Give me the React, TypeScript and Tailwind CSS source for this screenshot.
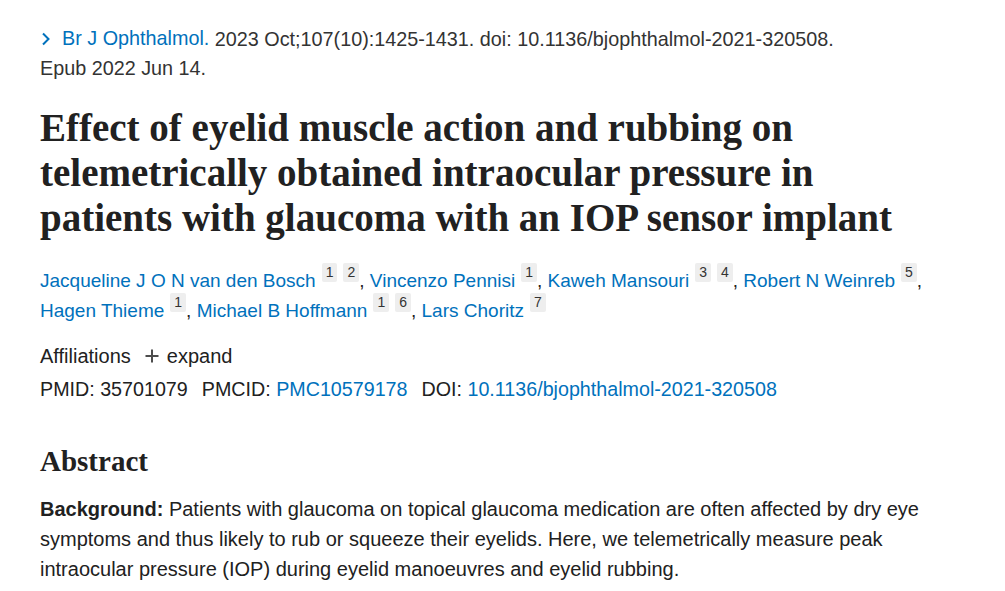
const sans = "font-['Liberation_Sans',Arial,sans-serif]"
const serif = "font-['Liberation_Serif','Times_New_Roman',serif]"

function Sup({ n }: { n: string }) {
  return (
    <span className="ml-[6px] inline-block align-top relative top-[-3px] bg-[#eeeeee] text-[#333] text-[14px] leading-[19px] px-[4px] rounded-[2px]">
      {n}
    </span>
  )
}

function Author({ name, refs, last }: { name: string; refs: string[]; last?: boolean }) {
  return (
    <span>
      <a className="text-[#0071bc]">{name}</a>
      {refs.map((r) => (
        <Sup key={r} n={r} />
      ))}
      {!last && <span className="text-[#212121]">, </span>}
    </span>
  )
}

export default function App() {
  const authors: { name: string; refs: string[] }[] = [
    { name: "Jacqueline J O N van den Bosch", refs: ["1", "2"] },
    { name: "Vincenzo Pennisi", refs: ["1"] },
    { name: "Kaweh Mansouri", refs: ["3", "4"] },
    { name: "Robert N Weinreb", refs: ["5"] },
    { name: "Hagen Thieme", refs: ["1"] },
    { name: "Michael B Hoffmann", refs: ["1", "6"] },
    { name: "Lars Choritz", refs: ["7"] },
  ]

  return (
    <div className={`min-h-[591px] bg-white text-[#212121] ${sans}`}>
      <div className="pl-10 pr-6 pt-[24px] w-[1000px]">
        {/* Citation */}
        <div className="text-[19.8px] leading-[29px] text-[#333]">
          <span className="inline-flex items-center text-[#0071bc]">
            <svg width="12" height="14" viewBox="0 0 12 14" className="mr-[10px]">
              <path d="M3 1.5 L8.5 7 L3 12.5" fill="none" stroke="#0071bc" strokeWidth="2" />
            </svg>
            Br J Ophthalmol.
          </span>{" "}
          2023 Oct;107(10):1425-1431. doi: 10.1136/bjophthalmol-2021-320508.
          <br />
          Epub 2022 Jun 14.
        </div>

        {/* Title */}
        <h1 className={`${serif} font-bold text-[39px] leading-[45px] text-[#212121] mt-[22px] whitespace-nowrap`}>
          Effect of eyelid muscle action and rubbing on
          <br />
          telemetrically obtained intraocular pressure in
          <br />
          patients with glaucoma with an IOP sensor implant
        </h1>

        {/* Authors */}
        <div className="text-[19px] leading-[30px] mt-[26px] w-[900px]">
          {authors.map((a, i) => (
            <Author key={a.name} name={a.name} refs={a.refs} last={i === authors.length - 1} />
          ))}
        </div>

        {/* Affiliations */}
        <div className="text-[20px] leading-[30px] mt-[15px] flex items-center">
          <span>Affiliations</span>
          <span className="ml-[14px] inline-flex items-center">
            <svg width="14" height="14" viewBox="0 0 14 14" className="mr-[8px]">
              <path d="M7 0.5 V13.5 M0.5 7 H13.5" stroke="#4d4d4d" strokeWidth="2" />
            </svg>
            expand
          </span>
        </div>

        {/* Identifiers */}
        <div className="text-[19.7px] leading-[30px] mt-[3px] flex gap-[14px]">
          <span>PMID: 35701079</span>
          <span>
            PMCID: <a className="text-[#0071bc]">PMC10579178</a>
          </span>
          <span>
            DOI: <a className="text-[#0071bc]">10.1136/bjophthalmol-2021-320508</a>
          </span>
        </div>

        {/* Abstract */}
        <h2 className={`${serif} font-bold text-[29px] leading-[36px] mt-[39px]`}>Abstract</h2>
        <p className="text-[20px] leading-[30px] mt-[15px] w-[890px]">
          <strong>Background:</strong> Patients with glaucoma on topical glaucoma medication are often affected by dry eye symptoms and thus likely to rub or squeeze their eyelids. Here, we telemetrically measure peak intraocular pressure (IOP) during eyelid manoeuvres and eyelid rubbing.
        </p>
      </div>
    </div>
  )
}
